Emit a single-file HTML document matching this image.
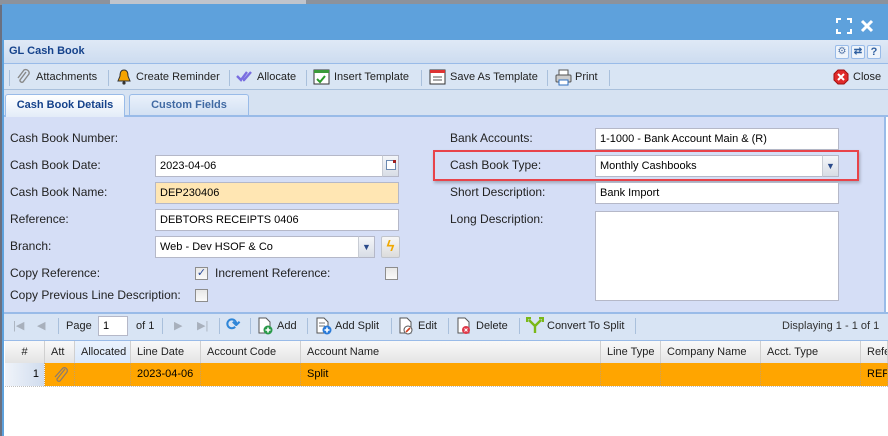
<!DOCTYPE html>
<html><head><meta charset="utf-8"><style>
*{margin:0;padding:0;box-sizing:border-box}
body{width:888px;height:436px;overflow:hidden;position:relative;background:#fff;font-family:"Liberation Sans",Arial,sans-serif;font-size:12px;color:#222}
.a{position:absolute}
.lbl{position:absolute;font-size:12px;color:#222;white-space:nowrap}
.sm{font-size:11px}
.inp{position:absolute;background:#fff;border:1px solid #b5b8c8;height:22px;padding:4px 0 0 4px;font-size:11px;white-space:nowrap;color:#000}
.trg{position:absolute;width:17px;height:22px;background:linear-gradient(#f4f6fa,#d8dde6);border:1px solid #b5b8c8;border-left:1px solid #c8ccd4}
.tb{position:absolute;top:64px;height:26px;font-size:11px;color:#222;white-space:nowrap;line-height:26px}
.sep{position:absolute;width:1px;height:16px;background:#a9c0dc}
.cb{position:absolute;width:13px;height:13px;border:1px solid #8d8d8d;background:linear-gradient(#e8e8e8,#fafafa)}
.th{position:absolute;top:341px;height:22px;line-height:22px;padding-left:6px;border-right:1px solid #d0d0d0;background:linear-gradient(#f9f9f9,#e4e4e4);font-size:11px;white-space:nowrap;overflow:hidden}
.td{position:absolute;top:363px;height:23px;line-height:22px;padding-left:6px;border-right:1px dotted #c8a060;font-size:11px;white-space:nowrap;overflow:hidden;background:#ffa500;color:#000}
</style></head><body>
<div class="a" style="left:0;top:0;width:888px;height:5px;background:#8c929c"></div>
<div class="a" style="left:110px;top:0;width:196px;height:5px;background:#c0c4cc"></div>
<div class="a" style="left:0;top:5px;width:3px;height:431px;background:#6a7080"></div>
<div class="a" style="left:2px;top:4px;width:886px;height:36px;background:#5ea1dc"></div>
<svg class="a" style="left:836px;top:18px" width="16" height="16"><path d="M1 5V1h4M11 1h4v4M15 11v4h-4M5 15H1v-4" stroke="#fff" stroke-width="2" fill="none"/></svg>
<svg class="a" style="left:860px;top:19px" width="14" height="14"><path d="M2 2l10 10M12 2L2 12" stroke="#fff" stroke-width="3"/></svg>
<div class="a" style="left:2px;top:40px;width:886px;height:396px;background:#fff;border-left:2px solid #5ea1dc"></div>
<div class="a" style="left:4px;top:40px;width:884px;height:24px;background:linear-gradient(#dfe9f6,#cddcf0);border-bottom:1px solid #99bbe8"></div>
<div class="a" style="left:9px;top:45px;font-weight:bold;color:#15428b;font-size:11px">GL Cash Book</div>
<div class="a" style="left:835px;top:45px;width:14px;height:14px;border:1px solid #99bbe8;border-radius:2px;background:#eef4fb;color:#5577aa;font-size:10px;text-align:center;line-height:12px">⚙</div>
<div class="a" style="left:851px;top:45px;width:14px;height:14px;border:1px solid #99bbe8;border-radius:2px;background:#eef4fb;color:#3060a0;font-size:10px;text-align:center;line-height:12px;font-weight:bold">⇄</div>
<div class="a" style="left:867px;top:45px;width:14px;height:14px;border:1px solid #99bbe8;border-radius:2px;background:#eef4fb;color:#3060a0;font-size:11px;text-align:center;line-height:12px;font-weight:bold">?</div>
<div class="a" style="left:4px;top:64px;width:884px;height:26px;background:#d9e5f4;border-bottom:1px solid #a9c0dc"></div>
<div class="sep" style="left:9px;top:70px"></div>
<svg class="a" style="left:15px;top:68px" width="16" height="18"><path d="M11 4L5 12a2 2 0 0 0 3 2l6-8a3.5 3.5 0 0 0-5-4L3 10" stroke="#888" stroke-width="1.4" fill="none"/></svg>
<div class="tb" style="left:36px">Attachments</div>
<div class="sep" style="left:108px;top:70px"></div>
<svg class="a" style="left:116px;top:68px" width="16" height="18"><path d="M8 2c-3 0-4 3-4 6l-2 5h12l-2-5c0-3-1-6-4-6z" fill="#f5a300" stroke="#333" stroke-width="1"/><circle cx="8" cy="15" r="1.6" fill="#333"/></svg>
<div class="tb" style="left:136px">Create Reminder</div>
<div class="sep" style="left:229px;top:70px"></div>
<svg class="a" style="left:236px;top:70px" width="18" height="12"><path d="M1 6l4 4 6-8M7 10l1 0 7-8" stroke="#7a6ee0" stroke-width="2.4" fill="none"/></svg>
<div class="tb" style="left:257px">Allocate</div>
<div class="sep" style="left:306px;top:70px"></div>
<svg class="a" style="left:313px;top:69px" width="17" height="16"><rect x="1" y="1" width="15" height="14" fill="#fff" stroke="#333"/><rect x="1" y="1" width="15" height="3" fill="#3a9a3a"/><path d="M4 10l3 3 5-6" stroke="#2a9a2a" stroke-width="2" fill="none"/></svg>
<div class="tb" style="left:334px">Insert Template</div>
<div class="sep" style="left:421px;top:70px"></div>
<svg class="a" style="left:429px;top:69px" width="17" height="16"><rect x="1" y="1" width="15" height="14" fill="#fff" stroke="#333"/><rect x="1" y="1" width="15" height="3" fill="#d33"/><path d="M4 8h9M4 11h9" stroke="#555"/></svg>
<div class="tb" style="left:450px">Save As Template</div>
<div class="sep" style="left:547px;top:70px"></div>
<svg class="a" style="left:555px;top:69px" width="17" height="17"><rect x="4" y="1" width="9" height="6" fill="#fff" stroke="#555"/><rect x="1" y="6" width="15" height="7" rx="1" fill="#ccc" stroke="#555"/><rect x="4" y="11" width="9" height="5" fill="#fff" stroke="#3070c0"/></svg>
<div class="tb" style="left:575px">Print</div>
<div class="sep" style="left:609px;top:70px"></div>
<svg class="a" style="left:833px;top:69px" width="16" height="16"><path d="M5 1h6l4 4v6l-4 4H5l-4-4V5z" fill="#e02a2a" stroke="#a01010"/><path d="M5 5l6 6M11 5l-6 6" stroke="#fff" stroke-width="2"/></svg>
<div class="tb" style="left:853px">Close</div>
<div class="a" style="left:4px;top:90px;width:884px;height:26px;background:#d6e2f2"></div>
<div class="a" style="left:4px;top:115px;width:884px;height:2px;background:#99bbe8"></div>
<div class="a" style="left:5px;top:94px;width:120px;height:23px;background:linear-gradient(#fff,#e3ecf8);border:1px solid #99bbe8;border-bottom:none;border-radius:3px 3px 0 0;font-weight:bold;color:#15428b;text-align:center;line-height:21px;font-size:11px">Cash Book Details</div>
<div class="a" style="left:129px;top:94px;width:120px;height:21px;background:linear-gradient(#eaf1fb,#d3e1f3);border:1px solid #99bbe8;border-bottom:none;border-radius:3px 3px 0 0;font-weight:bold;color:#416aa3;text-align:center;line-height:21px;font-size:11px">Custom Fields</div>
<div class="a" style="left:4px;top:117px;width:882px;height:195px;background:#d5def6;border-right:2px solid #99bbe8"></div>
<div class="lbl" style="left:10px;top:131px">Cash Book Number:</div>
<div class="lbl" style="left:10px;top:158px">Cash Book Date:</div>
<div class="inp" style="left:155px;top:155px;width:228px">2023-04-06</div>
<div class="trg" style="left:382px;top:155px"><div class="a" style="left:3px;top:4px;width:10px;height:10px;border:1px solid #6a88b0;background:#fff"></div><div class="a" style="left:10px;top:4px;width:3px;height:3px;background:#a02020"></div></div>
<div class="lbl" style="left:10px;top:185px">Cash Book Name:</div>
<div class="inp" style="left:155px;top:182px;width:244px;background:#ffe6b3">DEP230406</div>
<div class="lbl" style="left:10px;top:212px">Reference:</div>
<div class="inp" style="left:155px;top:209px;width:244px">DEBTORS RECEIPTS 0406</div>
<div class="lbl" style="left:10px;top:239px">Branch:</div>
<div class="inp" style="left:155px;top:236px;width:204px">Web - Dev HSOF &amp; Co</div>
<div class="trg" style="left:358px;top:236px;color:#2a4a8a;font-size:9px;text-align:center;line-height:20px">▼</div>
<div class="a" style="left:381px;top:236px;width:19px;height:22px;border:1px solid #c0c4cc;border-radius:2px;background:linear-gradient(#f7f7f7,#dcdcdc);color:#f0a800;font-size:15px;text-align:center;line-height:20px;font-weight:bold">ϟ</div>
<div class="lbl" style="left:10px;top:266px">Copy Reference:</div>
<div class="cb" style="left:195px;top:267px;color:#2a4a9a;font-size:11px;line-height:11px;text-align:center">✓</div>
<div class="lbl" style="left:215px;top:266px">Increment Reference:</div>
<div class="cb" style="left:385px;top:267px"></div>
<div class="lbl" style="left:10px;top:288px">Copy Previous Line Description:</div>
<div class="cb" style="left:195px;top:289px"></div>
<div class="lbl" style="left:450px;top:131px">Bank Accounts:</div>
<div class="inp" style="left:595px;top:128px;width:244px">1-1000 - Bank Account Main &amp; (R)</div>
<div class="lbl" style="left:450px;top:158px">Cash Book Type:</div>
<div class="inp" style="left:595px;top:155px;width:228px">Monthly Cashbooks</div>
<div class="trg" style="left:822px;top:155px;color:#2a4a8a;font-size:9px;text-align:center;line-height:20px">▼</div>
<div class="a" style="left:433px;top:150px;width:426px;height:31px;border:2px solid #e8434a;box-shadow:1px 2px 3px rgba(0,0,0,.25)"></div>
<div class="lbl" style="left:450px;top:185px">Short Description:</div>
<div class="inp" style="left:595px;top:182px;width:244px">Bank Import</div>
<div class="lbl" style="left:450px;top:212px">Long Description:</div>
<div class="inp" style="left:595px;top:211px;width:244px;height:90px"></div>
<div class="a" style="left:4px;top:312px;width:884px;height:29px;background:#d8e4f4;border-top:2px solid #99bbe8;border-bottom:1px solid #99bbe8"></div>
<div class="a" style="left:13px;top:319px;color:#a8b0bc;font-size:11px">|◀</div>
<div class="a" style="left:37px;top:319px;color:#a8b0bc;font-size:11px">◀</div>
<div class="sep" style="left:58px;top:318px"></div>
<div class="lbl sm" style="left:66px;top:320px">Page</div>
<div class="inp" style="left:98px;top:316px;width:30px;height:20px;padding-top:3px">1</div>
<div class="lbl sm" style="left:136px;top:320px">of 1</div>
<div class="sep" style="left:162px;top:318px"></div>
<div class="a" style="left:174px;top:319px;color:#a8b0bc;font-size:11px">▶</div>
<div class="a" style="left:197px;top:319px;color:#a8b0bc;font-size:11px">▶|</div>
<div class="sep" style="left:219px;top:318px"></div>
<div class="a" style="left:226px;top:315px;color:#2f86d8;font-size:17px;font-weight:bold">⟳</div>
<div class="sep" style="left:250px;top:318px"></div>
<svg class="a" style="left:257px;top:317px" width="16" height="18"><path d="M2 1h7l4 4v11H2z" fill="#fff" stroke="#555"/><circle cx="11" cy="13" r="4.5" fill="#2a9a4a"/><path d="M11 10.5v5M8.5 13h5" stroke="#fff" stroke-width="1.6"/></svg>
<div class="lbl sm" style="left:277px;top:320px">Add</div>
<div class="sep" style="left:307px;top:318px"></div>
<svg class="a" style="left:315px;top:317px" width="17" height="18"><path d="M2 1h7l4 4v11H2z" fill="#fff" stroke="#555"/><path d="M4 6h6M4 9h6" stroke="#777"/><circle cx="12" cy="13" r="4.5" fill="#2a7ad8"/><path d="M12 10.5v5M9.5 13h5" stroke="#fff" stroke-width="1.6"/></svg>
<div class="lbl sm" style="left:335px;top:320px">Add Split</div>
<div class="sep" style="left:391px;top:318px"></div>
<svg class="a" style="left:398px;top:317px" width="16" height="18"><path d="M2 1h7l4 4v11H2z" fill="#fff" stroke="#555"/><circle cx="10" cy="13" r="4" fill="#fff" stroke="#555"/><path d="M8 15l4-4" stroke="#d04020" stroke-width="1.6"/></svg>
<div class="lbl sm" style="left:418px;top:320px">Edit</div>
<div class="sep" style="left:448px;top:318px"></div>
<svg class="a" style="left:456px;top:317px" width="16" height="18"><path d="M2 1h7l4 4v11H2z" fill="#fff" stroke="#555"/><circle cx="10" cy="13" r="4" fill="#e03a4a"/><path d="M8.5 11.5l3 3M11.5 11.5l-3 3" stroke="#fff"/></svg>
<div class="lbl sm" style="left:476px;top:320px">Delete</div>
<div class="sep" style="left:519px;top:318px"></div>
<svg class="a" style="left:526px;top:317px" width="18" height="17"><path d="M9 16V9L3 3M9 9l6-6M1 5V1h4M13 1h4v4" stroke="#7ab818" stroke-width="2.4" fill="none"/></svg>
<div class="lbl sm" style="left:547px;top:320px">Convert To Split</div>
<div class="sep" style="left:635px;top:318px"></div>
<div class="lbl sm" style="left:782px;top:320px;color:#333">Displaying 1 - 1 of 1</div>
<div class="th" style="left:5px;width:40px;text-align:center;padding:0">#</div>
<div class="th" style="left:45px;width:30px;padding-left:6px">Att</div>
<div class="th" style="left:75px;width:56px;background:linear-gradient(#ebf3fd,#d9e8fb)">Allocated</div>
<div class="th" style="left:131px;width:70px">Line Date</div>
<div class="th" style="left:201px;width:100px">Account Code</div>
<div class="th" style="left:301px;width:300px">Account Name</div>
<div class="th" style="left:601px;width:60px">Line Type</div>
<div class="th" style="left:661px;width:100px">Company Name</div>
<div class="th" style="left:761px;width:100px">Acct. Type</div>
<div class="th" style="left:861px;width:27px">Refe</div>
<div class="td" style="left:5px;width:40px;background:linear-gradient(90deg,#f0f4fa,#d0dcee);text-align:right;padding-right:5px">1</div>
<div class="td" style="left:45px;width:30px"></div>
<svg class="a" style="left:52px;top:366px" width="18" height="18"><path d="M13 3L5 13a2 2 0 0 0 3 2l7-9a3 3 0 0 0-4-4L3 11" stroke="#8a7a70" stroke-width="1.2" fill="none"/></svg>
<div class="td" style="left:75px;width:56px"></div>
<div class="td" style="left:131px;width:70px">2023-04-06</div>
<div class="td" style="left:201px;width:100px"></div>
<div class="td" style="left:301px;width:300px">Split</div>
<div class="td" style="left:601px;width:60px"></div>
<div class="td" style="left:661px;width:100px"></div>
<div class="td" style="left:761px;width:100px"></div>
<div class="td" style="left:861px;width:27px">REF</div>
<div class="a" style="left:5px;top:386px;width:883px;height:1px;border-top:1px dotted #c0c0c0"></div>
</body></html>
